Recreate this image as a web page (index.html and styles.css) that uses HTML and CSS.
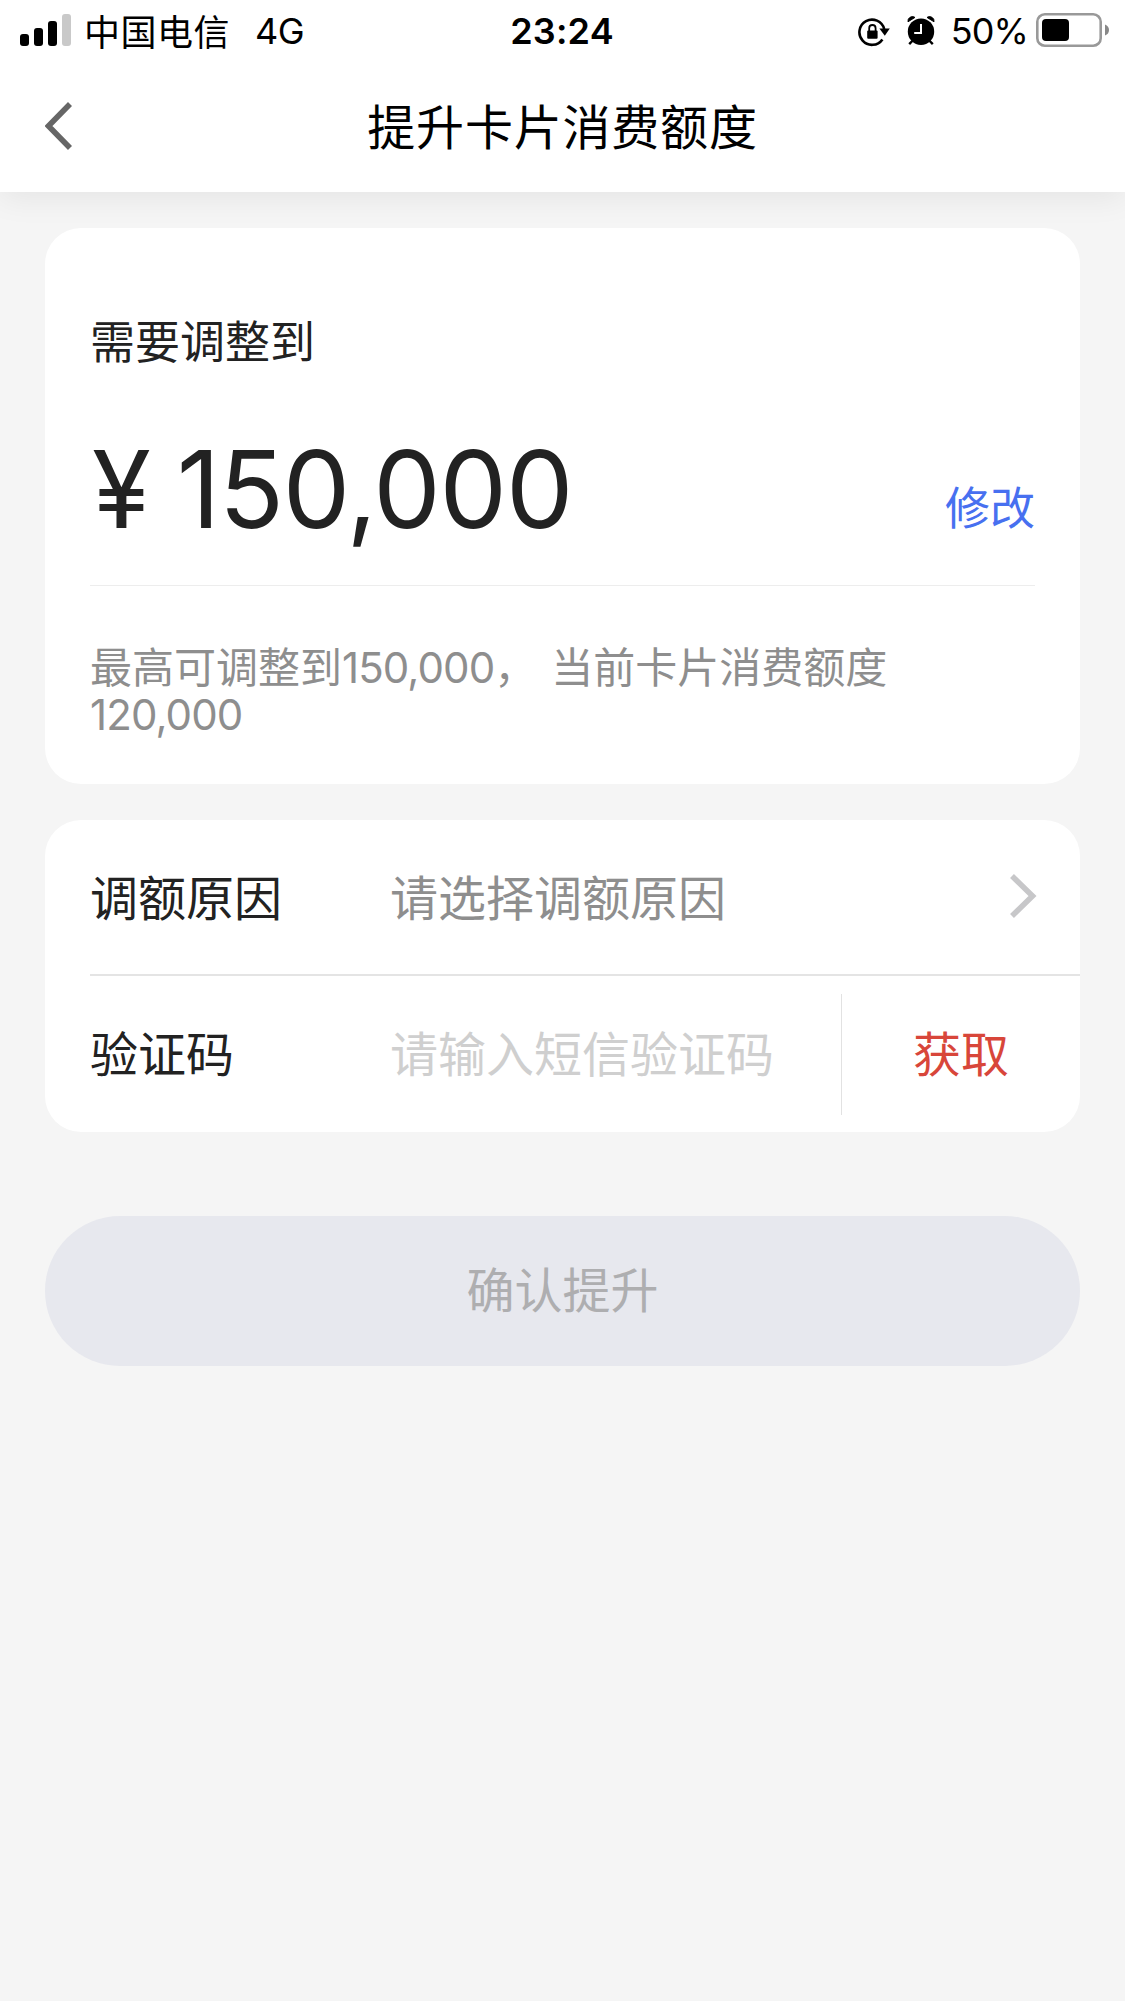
FILE: index.html
```html
<!DOCTYPE html>
<html lang="zh-CN">
<head>
<meta charset="utf-8">
<title>提升卡片消费额度</title>
<link rel="stylesheet" href="styles.css">
</head>
<body>
<header class="top">
  <div class="status">
    <div class="status-left">
      <svg class="signal" width="51" height="32" viewBox="0 0 51 32">
        <rect x="0" y="20" width="9" height="12" rx="3"/>
        <rect x="14" y="14" width="9" height="18" rx="3"/>
        <rect x="28" y="7" width="9" height="25" rx="3"/>
        <rect x="42" y="0" width="9" height="32" rx="3" fill="#c9c9c9"/>
      </svg>
      <span class="carrier">中国电信</span>
      <span class="network">4G</span>
    </div>
    <div class="clock">23:24</div>
    <div class="status-right">
      <svg class="lock" width="32" height="30" viewBox="0 0 32 30">
        <path d="M26.2 12A12.6 12.6 0 1 0 24.4 22.4" fill="none" stroke="#000" stroke-width="2.6"/>
        <path d="M21.4 11.4H31.8L26.8 18.8Z"/>
        <rect x="9.2" y="13.4" width="10.4" height="8.4" rx="1"/>
        <path d="M11.2 14V11.2a3.2 3.2 0 0 1 6.4 0V14" fill="none" stroke="#000" stroke-width="1.8"/>
      </svg>
      <svg class="alarm" width="28" height="30" viewBox="0 0 28 30">
        <circle cx="14" cy="15.7" r="13.2"/>
        <path d="M5.8 24.5L2.2 28.2M22.2 24.5L25.8 28.2" stroke="#000" stroke-width="2.4"/>
        <path d="M1 5.8A4.5 4.5 0 0 1 8 1.4ZM27 5.8A4.5 4.5 0 0 0 20 1.4Z" stroke="#000" stroke-width="1"/>
        <path d="M14 8V17H7.2" fill="none" stroke="#fff" stroke-width="2"/>
      </svg>
      <span class="percent">50%</span>
      <svg class="battery" width="74" height="34" viewBox="0 0 74 34">
        <rect x="1.3" y="1.3" width="63.4" height="31.4" rx="7.5" fill="none" stroke="#999" stroke-width="2.6"/>
        <rect x="6" y="6" width="27" height="22" rx="4"/>
        <path d="M69 11.5Q73 13 73 17T69 22.5Z" fill="#888"/>
      </svg>
    </div>
  </div>
  <nav class="nav">
    <svg class="back" width="27" height="48" viewBox="0 0 27 48">
      <path d="M25 2L3.5 24L25 46" fill="none" stroke="#666" stroke-width="5.6"/>
    </svg>
    <h1 class="title">提升卡片消费额度</h1>
  </nav>
</header>
<main class="content">
  <section class="card limit">
    <div class="limit-label">需要调整到</div>
    <div class="limit-row">
      <div class="amount"><span class="yen">¥</span><span>150,000</span></div>
      <a class="edit">修改</a>
    </div>
    <p class="hint">最高可调整到<span class="num">150,000</span>，<span class="current">当前卡片消费额度</span><br><span class="num">120,000</span></p>
  </section>
  <section class="card form">
    <div class="row reason">
      <span class="label">调额原因</span>
      <span class="value">请选择调额原因</span>
      <svg class="arrow" width="27" height="44" viewBox="0 0 27 44">
        <path d="M2 2L22.5 22L2 42" fill="none" stroke="#c7c7c9" stroke-width="5.6"/>
      </svg>
    </div>
    <div class="row code">
      <span class="label">验证码</span>
      <span class="value placeholder">请输入短信验证码</span>
      <a class="get">获取</a>
    </div>
  </section>
  <button class="submit" disabled>确认提升</button>
</main>
</body>
</html>
```
FILE: styles.css
```css
* { box-sizing: border-box; }

body {
  margin: 0;
  min-height: 2001px;
  background: #f5f5f5;
  color: #222;
  font-family: Inter, "Noto Sans CJK SC", sans-serif;
}

.top {
  position: relative;
  height: 192px;
  background: #fff;
  box-shadow: 0 6px 30px rgba(0, 0, 0, 0.07);
}

.status {
  display: grid;
  grid-template-columns: 1fr auto 1fr;
  align-items: center;
  height: 62px;
  padding: 0 15px 0 20px;
  color: #000;
  font-size: 36px;
  line-height: 40px;
}

.status-left,
.status-right {
  display: flex;
  align-items: center;
}

.status-right { justify-content: flex-end; }
.signal { margin: -2px 13px 0 0; }
.carrier { margin: 3px 25px 0 0; letter-spacing: 0.5px; }
.network { letter-spacing: -0.5px; }
.clock { margin-left: -6px; font-weight: 600; letter-spacing: 0.2px; }
.lock { margin: 2px 17px 0 0; }
.alarm { margin-right: 16px; }
.percent { margin: 0 8px 0 0; letter-spacing: -0.9px; }
.battery { margin-top: -2px; }

.nav {
  display: grid;
  grid-template-columns: 27px 1fr 27px;
  align-items: center;
  height: 128px;
  padding: 0 45px;
}

.title {
  margin: 0;
  padding-top: 3px;
  color: #000;
  font-size: 48px;
  font-weight: 400;
  line-height: 60px;
  letter-spacing: 0.8px;
  text-align: center;
}

.content {
  position: relative;
  padding: 36px 45px;
}

.card {
  background: #fff;
  border-radius: 36px;
}

.limit {
  height: 556px;
  padding: 85px 45px 0;
}

.limit-label {
  font-size: 45px;
  line-height: 60px;
}

.limit-row {
  display: flex;
  justify-content: space-between;
  align-items: flex-end;
  height: 213px;
  padding-bottom: 46px;
  border-bottom: 1px solid #ededed;
}

.amount {
  margin-bottom: -4px;
  padding-left: 2px;
  font-size: 107px;
  line-height: 108px;
  letter-spacing: -1.2px;
}

.yen { margin-right: 27px; }

.edit {
  color: #4770f0;
  font-size: 45px;
  line-height: 60px;
}

.hint {
  margin: 58px 0 0;
  color: #8e8e8e;
  font-size: 42px;
  line-height: 47px;
}

.num { letter-spacing: -0.9px; }
.current { margin-left: 15px; }

.form {
  height: 312px;
  margin-top: 36px;
  padding-left: 45px;
}

.row {
  display: flex;
  align-items: center;
  height: 156px;
  font-size: 48px;
  line-height: 60px;
}

.reason { border-bottom: 2px solid #e4e4e4; }
.label { width: 300px; padding-top: 4px; }
.value { flex: 1; padding-top: 4px; color: #8e8e8e; }
.placeholder { color: #cfcfcf; }
.code .label,
.code .value { padding-top: 1px; }
.arrow { margin: -3px 43px 0 0; }

.get {
  width: 239px;
  height: 121px;
  border-left: 1px solid #e2e2e2;
  color: #d8463a;
  line-height: 121px;
  text-align: center;
}

.submit {
  display: block;
  width: 100%;
  height: 150px;
  margin-top: 84px;
  padding: 0 0 9px;
  border: 0;
  border-radius: 75px;
  background: #e7e8ee;
  color: #aeaeb0;
  font-family: inherit;
  font-size: 48px;
}
```
